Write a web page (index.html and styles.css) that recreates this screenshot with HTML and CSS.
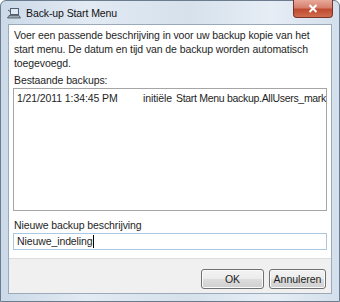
FILE: index.html
```html
<!DOCTYPE html>
<html lang="nl">
<head>
  <meta charset="UTF-8">
  <title>Back-up Start Menu</title>
  <link rel="stylesheet" href="styles.css">
</head>
<body>
  <div class="window">
    <div class="titlebar">
      <svg class="appicon" width="14" height="12" viewBox="0 0 14 12">
        <rect x="3.5" y="1.5" width="8" height="6" fill="#dfe9f3" stroke="#50606e"/>
        <path d="M2 8.5h10l1.5 2.5h-13z" fill="#9aa6b2" stroke="#4a5560" stroke-width="0.8"/>
        <path d="M1 3l2 1.5" stroke="#4a5560"/>
      </svg>
      <span class="title">Back-up Start Menu</span>
      <div class="close">
        <svg width="10" height="9" viewBox="0 0 10 9"><path d="M1.5 1l7 7M8.5 1l-7 7" stroke="#fff" stroke-width="2"/></svg>
      </div>
    </div>
    <div class="client">
      <div class="content">
        <p class="intro">Voer een passende beschrijving in voor uw backup kopie van het start menu. De datum en tijd van de backup worden automatisch toegevoegd.</p>
        <label class="lbl">Bestaande backups:</label>
        <div class="listbox">
          <div class="row">
            <span class="c-date">1/21/2011 1:34:45 PM</span>
            <span class="c-type">initiële</span>
            <span class="c-name">Start Menu backup.AllUsers_mark</span>
          </div>
        </div>
        <label class="lbl lbl-new">Nieuwe backup beschrijving</label>
        <div class="textbox">Nieuwe_indeling<span class="caret"></span></div>
      </div>
      <div class="footer">
        <button class="btn btn-ok">OK</button>
        <button class="btn btn-cancel">Annuleren</button>
      </div>
    </div>
  </div>
</body>
</html>
```

FILE: styles.css
```css
body {
  margin: 0;
  width: 340px;
  height: 302px;
  overflow: hidden;
  background: #fff;
  font-family: "Liberation Sans", Arial, sans-serif;
  font-size: 10.5px;
  letter-spacing: -0.1px;
  color: #1e1e1e;
}
.window {
  width: 340px;
  height: 302px;
  box-sizing: border-box;
  border: 1px solid #6a7c8e;
  border-radius: 6px 6px 0 0;
  background: linear-gradient(90deg, #cbd9e8 0%, #e2eaf3 25%, #d6e1ec 55%, #e6edf5 80%, #d3dfeb 100%);
  padding: 0 7px 7px 7px;
  display: flex;
  flex-direction: column;
}
.titlebar {
  height: 23px;
  display: flex;
  align-items: center;
  gap: 5px;
  position: relative;
}
.appicon {
  margin-left: -1px;
  margin-top: 1px;
}
.title {
  font-size: 10.5px;
  color: #111;
  margin-top: 1px;
}
.close {
  position: absolute;
  right: -1px;
  top: -1px;
  width: 40px;
  height: 18px;
  box-sizing: border-box;
  border: 1px solid #7a3328;
  border-top: none;
  border-radius: 0 0 4px 4px;
  background: linear-gradient(#e8a99a 0%, #d6806d 45%, #bf4a30 55%, #cf6e4f 100%);
  display: flex;
  align-items: center;
  justify-content: center;
}
.client {
  flex: 1;
  border: 1px solid #9aaabb;
  background: #fff;
  display: flex;
  flex-direction: column;
}
.content {
  flex: 1;
  padding: 3px 4px 0 4px;
}
.intro {
  margin: 0 0 0 1px;
  line-height: 14px;
}
.lbl {
  display: block;
  margin: 3px 0 1px 1px;
  line-height: 14px;
}
.listbox {
  height: 123px;
  border: 1px solid #a5a5a5;
  box-sizing: border-box;
  padding: 2px 0 2px 3px;
}
.row {
  display: flex;
  white-space: nowrap;
  overflow: hidden;
  line-height: 14px;
}
.c-date {
  width: 126px;
  flex: none;
}
.c-type {
  width: 33px;
  flex: none;
}
.c-name {
  flex: none;
  letter-spacing: -0.3px;
}
.lbl-new {
  margin-top: 7px;
}
.textbox {
  height: 17px;
  border: 1px solid #abc8e2;
  box-sizing: border-box;
  padding: 0 3px;
  line-height: 15px;
}
.caret {
  display: inline-block;
  width: 1px;
  height: 13px;
  background: #000;
  vertical-align: -3px;
}
.footer {
  height: 35px;
  border-top: 1px solid #dcdcdc;
  background: #f0f0f0;
  display: flex;
  justify-content: flex-end;
  align-items: flex-start;
  gap: 5px;
  padding: 10px 5px 0 0;
  box-sizing: border-box;
}
.btn {
  height: 20px;
  font: inherit;
  color: #1e1e1e;
  border: 1px solid #707070;
  border-radius: 3px;
  background: linear-gradient(#f3f3f3 0%, #ebebeb 50%, #dddddd 51%, #cfcfcf 100%);
  box-shadow: inset 0 0 0 1px #fafafa;
  padding: 0;
}
.btn-ok {
  width: 63px;
}
.btn-cancel {
  width: 57px;
}
```
